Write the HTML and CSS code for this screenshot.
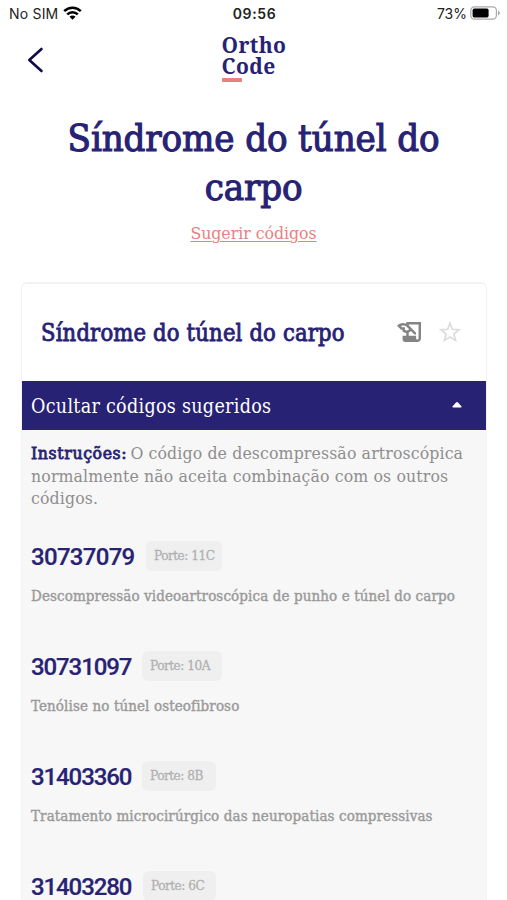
FILE: index.html
```html
<!DOCTYPE html>
<html lang="pt-BR">
<head>
<meta charset="utf-8">
<title>Ortho Code</title>
<link rel="stylesheet" href="styles.css">
</head>
<body>
<div class="status">
  <div class="carrier">
    <span>No SIM</span>
    <svg width="19" height="14" viewBox="0 0 19 14" fill="none" stroke="#000" stroke-width="2.5">
      <path d="M1.2 5.2C5.8.6 13.2.6 17.8 5.2"/>
      <path d="M4.2 8.4c3-2.9 7.6-2.9 10.6 0"/>
      <path d="M6.5 10.7c1.7-1.5 4.3-1.5 6 0L9.5 13.8z" fill="#000" stroke="none"/>
    </svg>
  </div>
  <div class="clock">09:56</div>
  <div class="power">
    <span>73%</span>
    <svg width="31" height="14" viewBox="0 0 31 14">
      <rect x=".8" y=".8" width="25.6" height="12.4" rx="3.6" fill="#fff" stroke="#a9a9a9" stroke-width="1.2"/>
      <rect x="2.6" y="2.6" width="16" height="8.8" rx="1.6"/>
      <path d="M28 4.6c2.4.8 2.4 4 0 4.8z" fill="#a9a9a9"/>
    </svg>
  </div>
</div>
<header class="header">
  <svg class="back" width="17" height="26" viewBox="0 0 17 26" fill="none" stroke="#100a48" stroke-width="2.6" stroke-linecap="round" stroke-linejoin="round"><path d="M14.5 2 2.3 13l12.2 11"/></svg>
  <div class="logo"><span>Ortho</span><span>Code</span><i class="logo-bar"></i></div>
</header>
<h1 class="title">Síndrome do túnel do carpo</h1>
<a class="suggest">Sugerir códigos</a>
<main class="card">
  <div class="card-head">
    <h2 class="card-title">Síndrome do túnel do carpo</h2>
    <svg class="scroll-icon" width="24" height="20" viewBox="1.44 4 19.56 16" preserveAspectRatio="none" fill="#848484">
      <path d="M9 4v1.38c-.83-.33-1.72-.5-2.61-.5-1.79 0-3.58.68-4.95 2.05l3.33 3.33h1.11v1.11c.86.86 1.98 1.31 3.11 1.36V15H6v3c0 1.1.9 2 2 2h10c1.66 0 3-1.34 3-3V4H9zm-1.11 6.41V8.26H5.61L4.57 7.22a5.07 5.07 0 0 1 1.82-.34c1.34 0 2.59.52 3.54 1.46l1.41 1.41-.2.2a2.7 2.7 0 0 1-1.92.8c-.47 0-.93-.12-1.33-.34zM19 17c0 .55-.45 1-1 1s-1-.45-1-1v-2h-6v-2.59c.57-.23 1.1-.57 1.56-1.03l.2-.2L15.59 14H17v-1.41l-6-5.97V6h8v11z"/>
    </svg>
    <svg class="star" width="22" height="22" viewBox="0 0 22 22" fill="none" stroke="#dcdcdc" stroke-width="1.7"><path d="M11 2.2l2.4 6.1 6.5.5-5 4.2 1.6 6.4L11 15.9l-5.5 3.5L7.1 13l-5-4.2 6.5-.5z"/></svg>
  </div>
  <div class="toggle">
    <span>Ocultar códigos sugeridos</span>
    <svg width="10" height="7" viewBox="0 0 10 7"><path d="M.6 5.3 4 1.4c.6-.7 1.4-.7 2 0l3.4 3.9c.5.7.2 1.2-.5 1.2H1.100C.4 6.500.1 6 .6 5.300z" fill="#fff"/></svg>
  </div>
  <div class="codes">
    <p class="note"><b>Instruções:</b> O código de descompressão artroscópica<br>normalmente não aceita combinação com os outros<br>códigos.</p>
    <section class="item">
      <div class="row"><span class="code wide">30737079</span><span class="porte">Porte: 11C</span></div>
      <p class="desc">Descompressão videoartroscópica de punho e túnel do carpo</p>
    </section>
    <section class="item">
      <div class="row"><span class="code">30731097</span><span class="porte a">Porte: 10A</span></div>
      <p class="desc">Tenólise no túnel osteofibroso</p>
    </section>
    <section class="item">
      <div class="row"><span class="code">31403360</span><span class="porte b">Porte: 8B</span></div>
      <p class="desc">Tratamento microcirúrgico das neuropatias compressivas</p>
    </section>
    <section class="item last">
      <div class="row"><span class="code">31403280</span><span class="porte c">Porte: 6C</span></div>
    </section>
  </div>
</main>
</body>
</html>
```
FILE: styles.css
```css
* { box-sizing: border-box; }
body {
  margin: 0;
  height: 900px;
  overflow: hidden;
  background: #fff;
  color: #272274;
  font-family: "Roboto Slab", "DejaVu Serif Condensed", serif;
}
h1, h2, p { margin: 0; font-weight: 400; }
svg { display: block; flex: none; }

.status {
  display: grid;
  grid-template-columns: 1fr auto 1fr;
  align-items: center;
  height: 28px;
  padding: 0 7px 0 9px;
  font: 14px/28px Inter, sans-serif;
  color: #222;
}
.carrier, .power { display: flex; align-items: center; }
.carrier { gap: 5px; letter-spacing: .2px; }
.carrier svg { margin-top: -2px; }
.clock { font-weight: 600; letter-spacing: .6px; }
.power { justify-content: flex-end; gap: 3px; margin-right: -1px; }
.power svg { margin-top: -2px; }

.header {
  display: grid;
  grid-template-columns: 1fr auto 1fr;
  height: 84px;
  padding: 7px 0 0 27px;
}
.back { margin-top: 12px; }
.logo {
  display: flex;
  flex-direction: column;
  width: 64px;
  margin-right: 27px;
  font: 700 21px/21px "Noto Serif", "DejaVu Serif Condensed", serif;
  letter-spacing: .4px;
}
.logo-bar { width: 20px; height: 4px; margin-top: 1px; border-radius: 1px; background: #e98080; }

.title {
  font-size: 38px;
  line-height: 49px;
  letter-spacing: -.12px;
  text-align: center;
  padding: 2px 60px 0;
  -webkit-text-stroke: 1.1px #272274;
}
.suggest {
  display: block;
  margin-top: 9px;
  text-align: center;
  font-size: 17.5px;
  line-height: 24px;
  letter-spacing: -.02px;
  color: #e98080;
  text-decoration: underline;
  text-decoration-thickness: 1px;
  text-underline-offset: 2px;
}

.card {
  margin: 37px 20px 0 21px;
  height: 618px;
  border: 1px solid #f3f3f3;
  border-width: 2px 1px 0;
  border-radius: 6px 6px 0 0;
}
.card-head {
  display: flex;
  align-items: center;
  height: 97px;
  padding: 0 25px 2px 19px;
}
.card-title {
  flex: 1;
  padding-top: 3px;
  font-size: 23.5px;
  letter-spacing: .18px;
  white-space: nowrap;
  -webkit-text-stroke: .8px #272274;
}
.scroll-icon { margin-right: 18px; }
.toggle {
  display: flex;
  align-items: center;
  justify-content: space-between;
  height: 49px;
  padding: 2px 24px 0 9px;
  background: #272274;
  color: #fff;
  font-size: 19.5px;
  letter-spacing: .3px;
}
.toggle svg { margin-top: -4px; }
.codes { height: 470px; padding: 12px 9px 0; background: #f7f7f7; }
.note {
  font-size: 17.5px;
  line-height: 22.7px;
  letter-spacing: .13px;
  color: #8e8e8e;
  white-space: nowrap;
}
.note b {
  font-weight: 400;
  letter-spacing: .62px;
  color: #272274;
  -webkit-text-stroke: .8px #272274;
  margin-right: -2px;
}
.item { height: 110px; }
.item.last { height: 30px; }
.note + .item { margin-top: 31px; }
.row { display: flex; align-items: center; height: 30px; }
.code {
  width: 111px;
  padding-top: 1px;
  font: 500 24px/30px Roboto, sans-serif;
  letter-spacing: -1.1px;
  -webkit-text-stroke: .2px #272274;
}
.wide { width: 115px; letter-spacing: -.7px; }
.porte {
  height: 30px;
  padding-left: 8px;
  width: 76px;
  border-radius: 6px;
  background: #efefef;
  color: #b1b1b1;
  font-size: 13.5px;
  line-height: 29px;
  letter-spacing: -.5px;
  white-space: nowrap;
  -webkit-text-stroke: .3px #b1b1b1;
}
.a { width: 80px; }
.b { width: 74px; }
.c { width: 73px; margin-left: 1px; }
.desc {
  margin-top: 14px;
  font-size: 15px;
  line-height: 22px;
  letter-spacing: .11px;
  color: #9a9a9a;
  white-space: nowrap;
  -webkit-text-stroke: .4px #9a9a9a;
}
```
